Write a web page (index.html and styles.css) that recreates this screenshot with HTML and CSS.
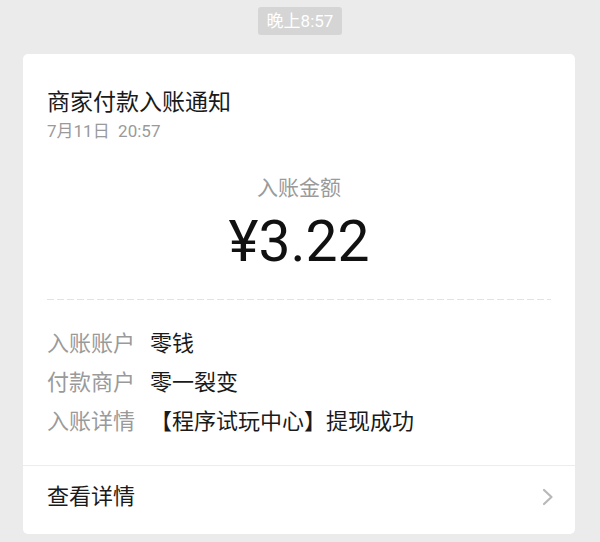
FILE: index.html
```html
<!DOCTYPE html>
<html lang="zh-CN">
<head>
<meta charset="utf-8">
<title>商家付款入账通知</title>
<link rel="stylesheet" href="styles.css">
</head>
<body>
<div class="page">
  <div class="time-row"><span class="time-badge">晚上8:57</span></div>
  <div class="card">
    <div class="card-body">
      <div class="title">商家付款入账通知</div>
      <div class="date">7月11日&nbsp;&nbsp;20:57</div>
      <div class="amount-label">入账金额</div>
      <div class="amount">¥3.22</div>
      <div class="dashed"></div>
      <div class="rows">
        <div class="row"><span class="label">入账账户</span><span class="value">零钱</span></div>
        <div class="row"><span class="label">付款商户</span><span class="value">零一裂变</span></div>
        <div class="row"><span class="label">入账详情</span><span class="value">【程序试玩中心】提现成功</span></div>
      </div>
    </div>
    <div class="footer">
      <span class="footer-text">查看详情</span>
      <svg class="chevron" width="12" height="18" viewBox="0 0 12 18"><polyline points="2,2 9.5,9 2,16" fill="none" stroke="#b8b8b8" stroke-width="2.2" stroke-linecap="round" stroke-linejoin="round"/></svg>
    </div>
  </div>
</div>
</body>
</html>
```

FILE: styles.css
```css
html, body {
  margin: 0;
  padding: 0;
  background: #ebebeb;
}
body {
  font-family: Roboto, "Noto Sans CJK SC", sans-serif;
  width: 600px;
  height: 542px;
  overflow: hidden;
}
.page {
  padding-top: 7px;
}
.time-row {
  display: flex;
  justify-content: center;
}
.time-badge {
  background: #d5d5d5;
  color: #ffffff;
  font-size: 17px;
  line-height: 28px;
  height: 28px;
  padding: 0 9px;
  border-radius: 3px;
}
.card {
  margin: 19px 25px 0 23px;
  background: #ffffff;
  border-radius: 5px;
  height: 480px;
  display: flex;
  flex-direction: column;
}
.card-body {
  padding: 34px 24px 0 24px;
}
.title {
  font-size: 23px;
  line-height: 30px;
  color: #1a1a1a;
}
.date {
  margin-top: 2px;
  font-size: 17px;
  line-height: 22px;
  color: #9a9a9a;
}
.amount-label {
  margin-top: 32px;
  text-align: center;
  font-size: 21px;
  line-height: 28px;
  color: #9a9a9a;
}
.amount {
  margin-top: 8px;
  text-align: center;
  font-size: 57px;
  line-height: 64px;
  color: #111111;
}
.dashed {
  margin-top: 25px;
  height: 1px;
  background: repeating-linear-gradient(to right, #e3e3e3 0 7px, transparent 7px 10px);
}
.rows {
  margin-top: 24px;
  padding-bottom: 24px;
  border-bottom: 1px solid #ececec;
  margin-left: -24px;
  margin-right: -24px;
  padding-left: 24px;
  padding-right: 24px;
}
.row {
  display: flex;
  font-size: 22px;
  line-height: 39px;
}
.label {
  width: 103px;
  color: #9a9a9a;
  flex-shrink: 0;
}
.value {
  color: #1a1a1a;
}
.footer {
  display: flex;
  align-items: center;
  justify-content: space-between;
  padding: 16px 21px 0 24px;
}
.footer-text {
  font-size: 22px;
  line-height: 30px;
  color: #1a1a1a;
}
.chevron {
  display: block;
}
```
